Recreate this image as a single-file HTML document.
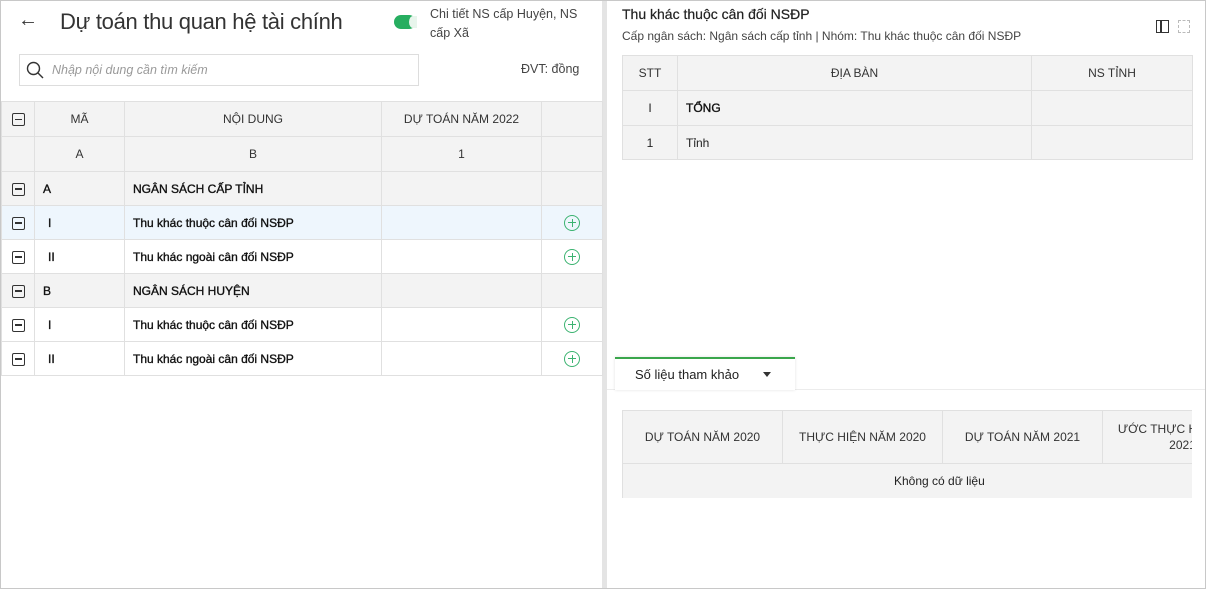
<!DOCTYPE html>
<html><head><meta charset="utf-8"><style>
*{box-sizing:border-box;margin:0;padding:0}
body{width:1206px;height:589px;overflow:hidden;font-family:"Liberation Sans",sans-serif;color:#222;background:#fff;position:relative}
.frame{position:absolute;left:0;top:0;width:1206px;height:589px;border:1px solid #c8c8c8}
.abs{position:absolute}
table{border-collapse:collapse;table-layout:fixed;position:absolute}
td{border:1px solid #e0e0e0;font-size:12px;padding:0 8px;white-space:nowrap;overflow:hidden}
.hd td{background:#f3f3f3;text-align:center;color:#333}
.g td{background:#f3f3f3}
.sel td{background:#eef6fd}
.b{font-weight:normal;color:#111;-webkit-text-stroke:0.35px #111}
.mb{display:inline-block;width:13px;height:13px;border:1.5px solid #333;border-radius:2px;position:relative;vertical-align:middle}
.mb:after{content:"";position:absolute;left:2px;right:2px;top:4.5px;height:1.5px;background:#333}
.pl{display:inline-block;width:16px;height:16px;border:1.3px solid #3cb371;border-radius:50%;position:relative;vertical-align:middle}
.pl:before{content:"";position:absolute;left:3px;right:3px;top:6.5px;height:1.3px;background:#3cb371}
.pl:after{content:"";position:absolute;top:3px;bottom:3px;left:6.5px;width:1.3px;background:#3cb371}
</style></head><body>
<div class="frame"></div>
<div class="abs" style="left:602px;top:1px;width:5px;height:587px;background:#e4e4e4"></div>
<div class="abs" style="left:18px;top:9px;font-size:20px;color:#333">←</div>
<div class="abs" style="left:60px;top:9px;font-size:22px;color:#333;letter-spacing:-0.3px">Dự toán thu quan hệ tài chính</div>
<div class="abs" style="left:394px;top:15px;width:22px;height:14px;background:#27ae60;border-radius:7px"><div style="position:absolute;right:-1px;top:1px;width:8px;height:12px;border-radius:50% 0 0 50%;background:#e8f5ec"></div></div>
<div class="abs" style="left:430px;top:5px;font-size:12.5px;line-height:19px;color:#444">Chi tiết NS cấp Huyện, NS<br>cấp Xã</div>
<div class="abs" style="left:19px;top:54px;width:400px;height:32px;border:1px solid #ddd"></div>
<svg class="abs" style="left:26px;top:61px" width="18" height="18" viewBox="0 0 18 18"><circle cx="7.5" cy="7.5" r="6" fill="none" stroke="#333" stroke-width="1.4"/><line x1="12" y1="12" x2="17" y2="17" stroke="#333" stroke-width="1.4"/></svg>
<div class="abs" style="left:52px;top:63px;font-size:12.5px;color:#999;font-style:italic">Nhập nội dung cần tìm kiếm</div>
<div class="abs" style="left:521px;top:62px;font-size:12.5px;color:#444">ĐVT: đồng</div>
<table style="left:1px;top:101px;width:601px">
<colgroup><col style="width:33px"><col style="width:90px"><col style="width:257px"><col style="width:160px"><col style="width:61px"></colgroup>
<tr class="hd" style="height:35px"><td style="text-align:center;padding:0"><span class="mb"></span></td><td>MÃ</td><td>NỘI DUNG</td><td>DỰ TOÁN NĂM 2022</td><td></td></tr>
<tr class="hd" style="height:35px"><td></td><td>A</td><td>B</td><td>1</td><td></td></tr>
<tr class="g" style="height:34px"><td style="text-align:center;padding:0"><span class="mb"></span></td><td class="b">A</td><td class="b">NGÂN SÁCH CẤP TỈNH</td><td></td><td></td></tr>
<tr class="sel" style="height:34px"><td style="text-align:center;padding:0"><span class="mb"></span></td><td class="b" style="padding-left:13px">I</td><td class="b">Thu khác thuộc cân đối NSĐP</td><td></td><td style="text-align:center"><span class="pl"></span></td></tr>
<tr style="height:34px"><td style="text-align:center;padding:0"><span class="mb"></span></td><td class="b" style="padding-left:13px">II</td><td class="b">Thu khác ngoài cân đối NSĐP</td><td></td><td style="text-align:center"><span class="pl"></span></td></tr>
<tr class="g" style="height:34px"><td style="text-align:center;padding:0"><span class="mb"></span></td><td class="b">B</td><td class="b">NGÂN SÁCH HUYỆN</td><td></td><td></td></tr>
<tr style="height:34px"><td style="text-align:center;padding:0"><span class="mb"></span></td><td class="b" style="padding-left:13px">I</td><td class="b">Thu khác thuộc cân đối NSĐP</td><td></td><td style="text-align:center"><span class="pl"></span></td></tr>
<tr style="height:34px"><td style="text-align:center;padding:0"><span class="mb"></span></td><td class="b" style="padding-left:13px">II</td><td class="b">Thu khác ngoài cân đối NSĐP</td><td></td><td style="text-align:center"><span class="pl"></span></td></tr>
</table>
<div class="abs" style="left:622px;top:6px;font-size:14px;color:#222;-webkit-text-stroke:0.2px #222">Thu khác thuộc cân đối NSĐP</div>
<div class="abs" style="left:622px;top:29px;font-size:12px;color:#444">Cấp ngân sách: Ngân sách cấp tỉnh | Nhóm: Thu khác thuộc cân đối NSĐP</div>
<div class="abs" style="left:1156px;top:20px;width:13px;height:13px;border:1.5px solid #333"><div style="position:absolute;left:3px;top:0;bottom:0;width:1.5px;background:#333"></div></div>
<div class="abs" style="left:1178px;top:20px;width:12px;height:13px;border:1px dashed #bbb"></div>
<table style="left:622px;top:55px;width:570px">
<colgroup><col style="width:55px"><col style="width:354px"><col style="width:161px"></colgroup>
<tr class="hd" style="height:35px"><td>STT</td><td>ĐỊA BÀN</td><td>NS TỈNH</td></tr>
<tr class="g" style="height:35px"><td style="text-align:center">I</td><td class="b">TỔNG</td><td></td></tr>
<tr class="g" style="height:34px"><td style="text-align:center">1</td><td>Tỉnh</td><td></td></tr>
</table>
<div class="abs" style="left:607px;top:389px;width:598px;height:1px;background:#ececec"></div>
<div class="abs" style="left:615px;top:357px;width:180px;height:33px;border-top:2px solid #3aa64c;background:#fff;box-shadow:0 0 3px rgba(0,0,0,.12)"></div>
<div class="abs" style="left:635px;top:367px;font-size:13px;color:#222">Số liệu tham khảo</div>
<div class="abs" style="left:763px;top:372px;width:0;height:0;border-left:4px solid transparent;border-right:4px solid transparent;border-top:5px solid #333"></div>
<div class="abs" style="left:622px;top:410px;width:570px;height:88px;overflow:hidden">
<table style="left:0;top:0;width:640px">
<colgroup><col style="width:160px"><col style="width:160px"><col style="width:160px"><col style="width:160px"></colgroup>
<tr class="hd" style="height:53px"><td>DỰ TOÁN NĂM 2020</td><td>THỰC HIỆN NĂM 2020</td><td>DỰ TOÁN NĂM 2021</td><td style="white-space:normal;line-height:16px">ƯỚC THỰC HIỆN NĂM 2021</td></tr>
<tr class="g" style="height:35px"><td colspan="4" style="text-align:left;padding-left:271px">Không có dữ liệu</td></tr>
</table></div>
</body></html>
